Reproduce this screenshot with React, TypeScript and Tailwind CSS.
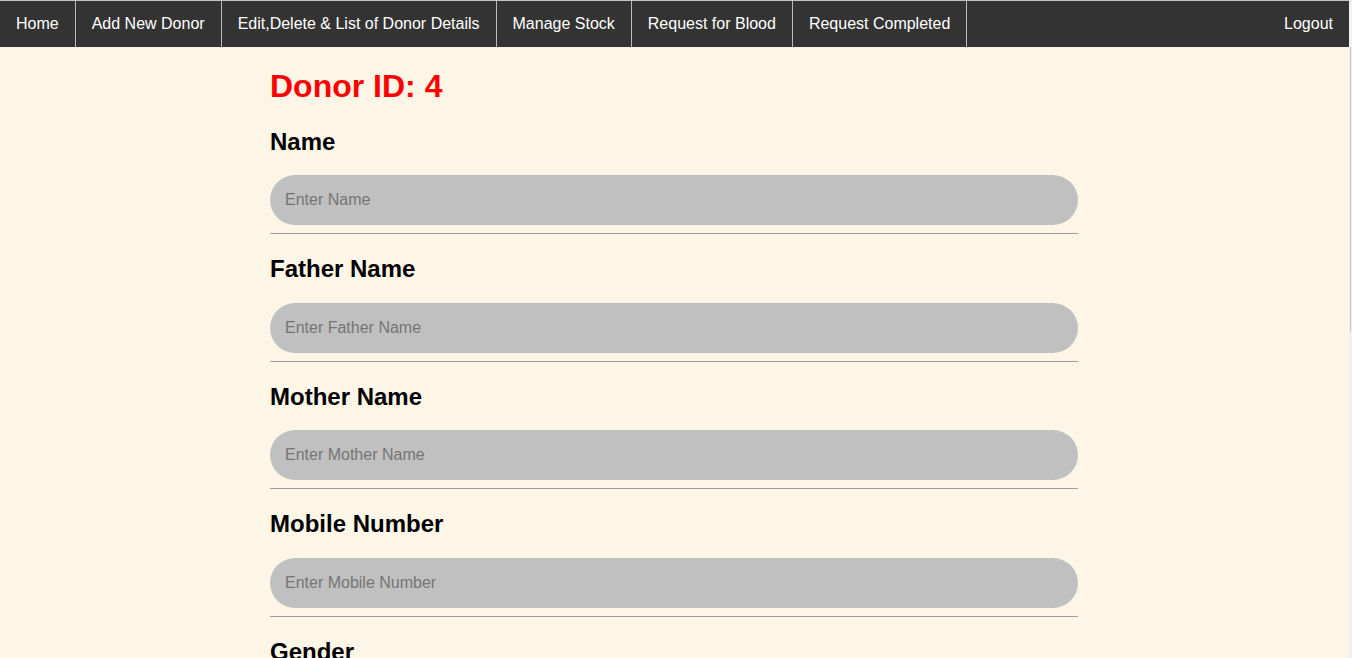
import React from 'react'

const navItems = [
  'Home',
  'Add New Donor',
  'Edit,Delete & List of Donor Details',
  'Manage Stock',
  'Request for Blood',
  'Request Completed',
]

const fields = [
  { label: 'Name', placeholder: 'Enter Name' },
  { label: 'Father Name', placeholder: 'Enter Father Name' },
  { label: 'Mother Name', placeholder: 'Enter Mother Name' },
  { label: 'Mobile Number', placeholder: 'Enter Mobile Number' },
  { label: 'Gender', placeholder: 'Enter Gender' },
]

const App = () => {
  return (
    <div className="flex h-[658px] overflow-hidden bg-[#fdf5e6] font-['Liberation_Sans',Arial,sans-serif]">
      <div className="flex-1">
        {/* Navbar */}
        <ul className="flex h-[47px] border-t border-[#c4c4c4] bg-[#333333] text-[16px] leading-[18px] text-white">
          {navItems.map((item) => (
            <li key={item} className="border-r border-[#bbbbbb]">
              <a href="#" className="block px-4 py-[14px]">
                {item}
              </a>
            </li>
          ))}
          <li className="ml-auto">
            <a href="#" className="block px-4 py-[14px]">
              Logout
            </a>
          </li>
        </ul>

        {/* Form */}
        <div className="ml-[270px] w-[808px]">
          <h1 className="mt-[21px] text-[32px] leading-[37px] font-bold text-[#ff0000]">Donor ID: 4</h1>
          <div className="mt-[22.5px]">
            {fields.map((f) => (
              <div key={f.label}>
                <h2 className="text-[24px] leading-[27.7px] font-bold text-black">{f.label}</h2>
                <input
                  type="text"
                  placeholder={f.placeholder}
                  className="mt-[20px] block h-[50px] w-full rounded-full bg-[#c0c0c0] px-[15px] text-[16px] text-black outline-none placeholder:text-[#757575]"
                />
                <div className="mt-2 mb-[19.92px] h-[2px] border-t border-[#9e9e9e]" />
              </div>
            ))}
          </div>
        </div>
      </div>

      {/* Scrollbar */}
      <div className="flex w-[3px] flex-col bg-[#f1f1f1]">
        <div className="mt-[47px] ml-[1px] h-[285px] w-px bg-[#c1c1c1]" />
      </div>
    </div>
  )
}

export default App
